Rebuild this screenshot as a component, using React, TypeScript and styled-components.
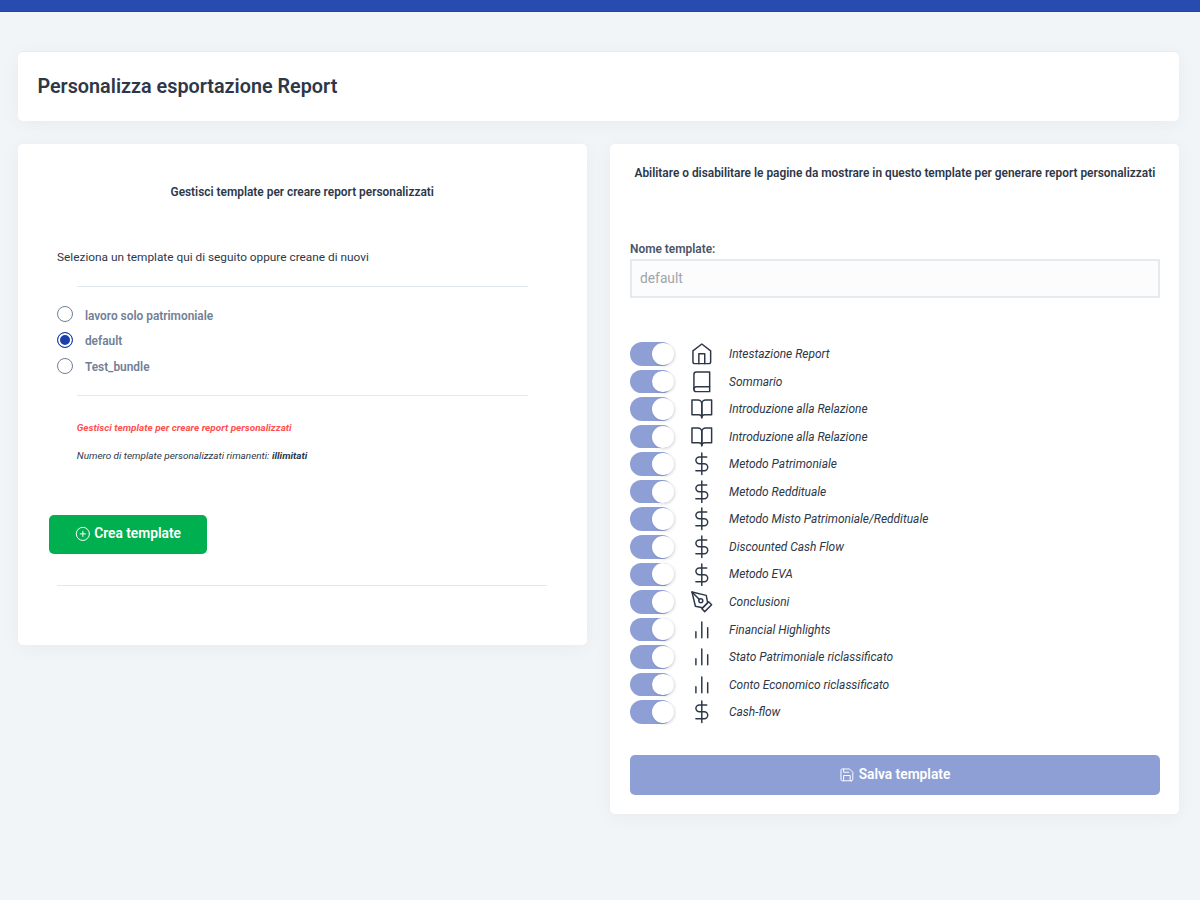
import React from 'react';
import styled, { createGlobalStyle } from 'styled-components';
import { FiHome, FiBook, FiBookOpen, FiDollarSign, FiPenTool, FiBarChart2, FiPlusCircle, FiSave } from 'react-icons/fi';
import type { IconType } from 'react-icons';

const GlobalStyle = createGlobalStyle`
  * { box-sizing: border-box; }
  body {
    margin: 0;
    background: #f1f5f8;
    color: #2d3748;
    font-family: Roboto, "Liberation Sans", sans-serif;
    font-size: 11.88px;
    line-height: 17.7px;
  }
`;

const Page = styled.div`
  height: 900px;
  overflow: hidden;
`;

const TopBar = styled.div`
  height: 12px;
  background: #284baf;
  border-bottom: 1px solid #2146b4;
`;

const Main = styled.main`
  padding: 39.7px 20.6px 0 17.7px;
`;

const Card = styled.section`
  background: #fff;
  border-radius: 5px;
  box-shadow: 0 3px 20px rgba(0, 0, 0, 0.043);
`;

const TitleCard = styled(Card)`
  height: 69px;
  padding: 2px 0 0 19.7px;
  display: flex;
  align-items: center;
  box-shadow: 0 3px 20px rgba(0, 0, 0, 0.043), 0 -1px 0 #e8eef3;
`;

const Title = styled.h1`
  margin: 0;
  font-size: 19.79px;
  line-height: 30px;
  font-weight: 600;
`;

const Columns = styled.div`
  display: grid;
  grid-template-columns: 1fr 1fr;
  column-gap: 23.6px;
  align-items: start;
  margin-top: 23.6px;
`;

const LeftCard = styled(Card)`
  height: 501px;
  padding: 40.2px 39.4px 39.4px;
`;

const RightCard = styled(Card)`
  height: 670px;
  padding: 20.5px 19.7px 19.7px;
`;

const Heading = styled.h2`
  margin: 0;
  text-align: center;
  white-space: nowrap;
  font-size: 11.88px;
  line-height: 17.7px;
  font-weight: 600;
`;

const Intro = styled.p`
  margin: 46.5px 0 0;
  font-size: 11.84px;
`;

const Divider = styled.hr<{ $top: number; $inset?: number }>`
  height: 1px;
  border: 0;
  background: #e2e8f0;
  margin: ${(p) => p.$top}px ${(p) => p.$inset ?? 0}px 0;
`;

const RadioList = styled.div`
  display: flex;
  flex-direction: column;
  gap: 9.7px;
  margin-top: 19px;
`;

const RadioRow = styled.label`
  display: flex;
  align-items: center;
  height: 16px;
  gap: 11.8px;
  color: #718096;
  font-weight: 600;
`;

const RadioDot = styled.span<{ $checked: boolean }>`
  width: 16px;
  height: 16px;
  border-radius: 50%;
  border: 1px solid ${(p) => (p.$checked ? '#1c3faa' : '#718096')};
  background: ${(p) => (p.$checked ? '#1c3faa' : '#fff')};
  box-shadow: inset 0 0 0 2px #fff;
`;

const RadioText = styled.span`
  padding-top: 4px;
`;

const Note = styled.p<{ $top: number; $alert?: boolean }>`
  margin: ${(p) => p.$top}px 19.7px 0;
  font-size: 9.95px;
  line-height: 14px;
  font-style: italic;
  font-weight: ${(p) => (p.$alert ? 700 : 400)};
  color: ${(p) => (p.$alert ? '#ff5050' : 'inherit')};
`;

const Button = styled.button`
  display: flex;
  align-items: center;
  justify-content: center;
  gap: 3.5px;
  height: 39.4px;
  padding: 0;
  border: 0;
  border-radius: 5px;
  color: #fff;
  font-family: inherit;
  font-size: 13.78px;
  font-weight: 600;
`;

const ButtonText = styled.span`
  padding-bottom: 1.6px;
`;

const CreateButton = styled(Button)`
  width: 157.5px;
  margin: 51.8px 0 0 -7.9px;
  background: #00b050;
`;

const SaveButton = styled(Button)`
  width: 100%;
  margin-top: 29.4px;
  background: #8e9fd5;
`;

const FieldLabel = styled.label`
  display: block;
  margin-top: 59px;
  font-weight: 600;
  color: #4a5568;
`;

const Field = styled.input`
  display: block;
  width: 100%;
  height: 39.4px;
  margin-top: -0.6px;
  padding: 0 8px;
  border: 2px solid #e5eaef;
  background: #fcfcfc;
  color: #a0a4ab;
  font-family: inherit;
  font-size: 13.78px;
`;

const PageList = styled.div`
  margin-top: 42.2px;
`;

const PageRow = styled.div`
  display: grid;
  grid-template-columns: 45px 54px 1fr;
  align-items: center;
  height: 27.56px;
`;

const Toggle = styled.span`
  display: flex;
  align-items: center;
  justify-content: flex-end;
  width: 44.3px;
  height: 23.6px;
  border-radius: 12px;
  background: linear-gradient(to right, #8e9fd5 82%, rgba(142, 159, 213, 0) 94%);
`;

const Knob = styled.span`
  width: 21.9px;
  height: 21.9px;
  border-radius: 50%;
  background: #fff;
  box-shadow: 1px 1px 3px rgba(0, 0, 0, 0.16);
`;

const IconCell = styled.span`
  display: flex;
  justify-content: center;
`;

const PageName = styled.span`
  padding-top: 2px;
  font-size: 11.95px;
  font-style: italic;
`;

const templates = ['lavoro solo patrimoniale', 'default', 'Test_bundle'];
const selected = 'default';

const pages: [IconType, string][] = [
  [FiHome, 'Intestazione Report'],
  [FiBook, 'Sommario'],
  [FiBookOpen, 'Introduzione alla Relazione'],
  [FiBookOpen, 'Introduzione alla Relazione'],
  [FiDollarSign, 'Metodo Patrimoniale'],
  [FiDollarSign, 'Metodo Reddituale'],
  [FiDollarSign, 'Metodo Misto Patrimoniale/Reddituale'],
  [FiDollarSign, 'Discounted Cash Flow'],
  [FiDollarSign, 'Metodo EVA'],
  [FiPenTool, 'Conclusioni'],
  [FiBarChart2, 'Financial Highlights'],
  [FiBarChart2, 'Stato Patrimoniale riclassificato'],
  [FiBarChart2, 'Conto Economico riclassificato'],
  [FiDollarSign, 'Cash-flow'],
];

export default function App() {
  return (
    <Page>
      <GlobalStyle />
      <TopBar />
      <Main>
        <TitleCard>
          <Title>Personalizza esportazione Report</Title>
        </TitleCard>
        <Columns>
          <LeftCard>
            <Heading>Gestisci template per creare report personalizzati</Heading>
            <Intro>Seleziona un template qui di seguito oppure creane di nuovi</Intro>
            <Divider $top={20} $inset={19.7} />
            <RadioList>
              {templates.map((name) => (
                <RadioRow key={name}>
                  <RadioDot $checked={name === selected} />
                  <RadioText>{name}</RadioText>
                </RadioRow>
              ))}
            </RadioList>
            <Divider $top={21.2} $inset={19.7} />
            <Note $top={25} $alert>Gestisci template per creare report personalizzati</Note>
            <Note $top={13.8}>
              Numero di template personalizzati rimanenti: <b>illimitati</b>
            </Note>
            <CreateButton>
              <FiPlusCircle size={15.75} strokeWidth={1.5} />
              <ButtonText>Crea template</ButtonText>
            </CreateButton>
            <Divider $top={31.5} />
          </LeftCard>
          <RightCard>
            <Heading>Abilitare o disabilitare le pagine da mostrare in questo template per generare report personalizzati</Heading>
            <FieldLabel htmlFor="template-name">Nome template:</FieldLabel>
            <Field id="template-name" defaultValue="default" readOnly />
            <PageList>
              {pages.map(([Icon, name], i) => (
                <PageRow key={i}>
                  <Toggle>
                    <Knob />
                  </Toggle>
                  <IconCell>
                    <Icon size={23.6} strokeWidth={1.5} />
                  </IconCell>
                  <PageName>{name}</PageName>
                </PageRow>
              ))}
            </PageList>
            <SaveButton>
              <FiSave size={15.75} strokeWidth={1.5} />
              <ButtonText>Salva template</ButtonText>
            </SaveButton>
          </RightCard>
        </Columns>
      </Main>
    </Page>
  );
}
